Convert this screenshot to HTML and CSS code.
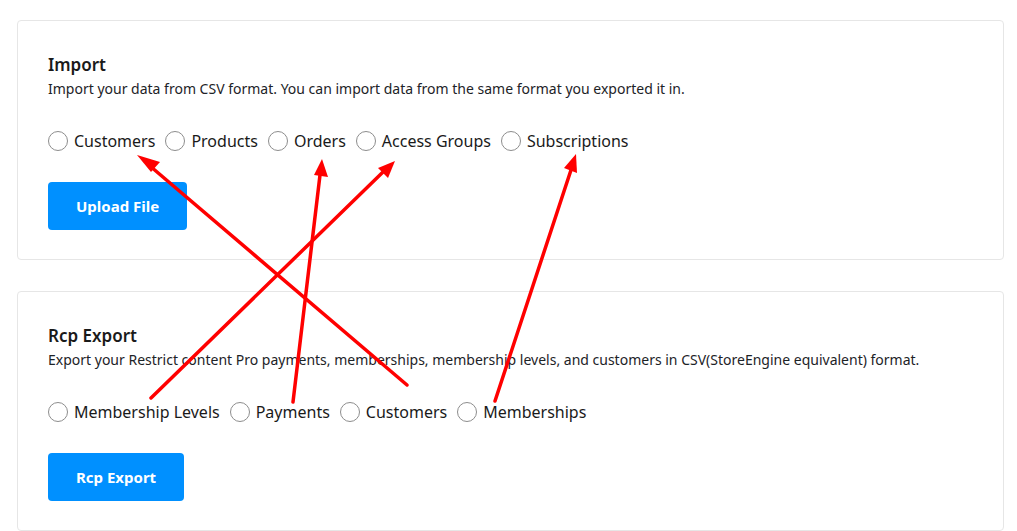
FILE: index.html
```html
<!DOCTYPE html>
<html lang="en">
<head>
    <meta charset="UTF-8">
    <meta name="viewport" content="width=device-width, initial-scale=1.0">
    <title>Import / Export</title>
    <link rel="stylesheet" href="styles.css">
</head>
<body>
    <div class="page">
        <div class="card">
            <h2>Import</h2>
            <p class="subtitle">Import your data from CSV format. You can import data from the same format you exported it in.</p>

            <div class="radio-group">
                <label class="radio"><input type="radio" name="import"> Customers</label>
                <label class="radio"><input type="radio" name="import"> Products</label>
                <label class="radio"><input type="radio" name="import"> Orders</label>
                <label class="radio"><input type="radio" name="import"> Access Groups</label>
                <label class="radio"><input type="radio" name="import"> Subscriptions</label>
            </div>

            <button class="main-btn">Upload File</button>
        </div>

        <div class="card">
            <h2>Rcp Export</h2>
            <p class="subtitle">Export your Restrict content Pro payments, memberships, membership levels, and customers in CSV(StoreEngine equivalent) format.</p>

            <div class="radio-group">
                <label class="radio"><input type="radio" name="rcp"> Membership Levels</label>
                <label class="radio"><input type="radio" name="rcp"> Payments</label>
                <label class="radio"><input type="radio" name="rcp"> Customers</label>
                <label class="radio"><input type="radio" name="rcp"> Memberships</label>
            </div>

            <button class="main-btn">Rcp Export</button>
        </div>

        <!-- стрелки-аннотации поверх скриншота -->
        <svg class="arrows" viewBox="0 0 1017 531">
            <g stroke="#ff0000" stroke-width="3.5" stroke-linecap="round">
                <line x1="407" y1="385" x2="150" y2="166"/>
                <line x1="293" y1="402" x2="320" y2="175"/>
                <line x1="151" y1="398" x2="383" y2="172"/>
                <line x1="495" y1="401" x2="571" y2="170"/>
            </g>
            <g fill="#ff0000">
                <polygon points="137,155 160,162 151,172"/>
                <polygon points="322,159 328,177 314,175"/>
                <polygon points="395,161 388,178 378,168"/>
                <polygon points="576,154 577,173 564,168"/>
            </g>
        </svg>
    </div>
</body>
</html>
```

FILE: styles.css
```css
* {
    margin: 0;
    padding: 0;
    box-sizing: border-box;
    font-family: 'Noto Sans', sans-serif;
}

body {
    background: #ffffff;
    color: #1d2327;
}

.page {
    position: relative;
    padding: 20px 13px 0 17px;
    display: flex;
    flex-direction: column;
    gap: 31px;
}

.card {
    border: 1px solid #e6e6e6;
    border-radius: 4px;
    padding: 31px 30px 29px;
    background: #fff;
}

h2 {
    font-size: 17px;
    font-weight: 600;
    line-height: 26px;
    color: #1a1a1a;
}

.subtitle {
    font-size: 14px;
    line-height: 22px;
    color: #1d2327;
    margin-bottom: 29px;
}

.radio-group {
    display: flex;
    align-items: center;
    gap: 10px;
    margin-bottom: 29px;
}

.radio {
    display: flex;
    align-items: center;
    gap: 6px;
    font-size: 16px;
    line-height: 24px;
    color: #1a1a1a;
    cursor: pointer;
}

.radio input {
    appearance: none;
    -webkit-appearance: none;
    width: 20px;
    height: 20px;
    border: 1px solid #8d8d8d;
    border-radius: 50%;
    background: #fff;
    margin: 0;
}

.main-btn {
    display: block;
    height: 48px;
    padding: 0 28px;
    background: #0090ff;
    color: #fff;
    border: none;
    border-radius: 4px;
    font-size: 15px;
    font-weight: 700;
    cursor: pointer;
}

.arrows {
    position: absolute;
    left: 0;
    top: 0;
    width: 1017px;
    height: 531px;
    pointer-events: none;
}
```
